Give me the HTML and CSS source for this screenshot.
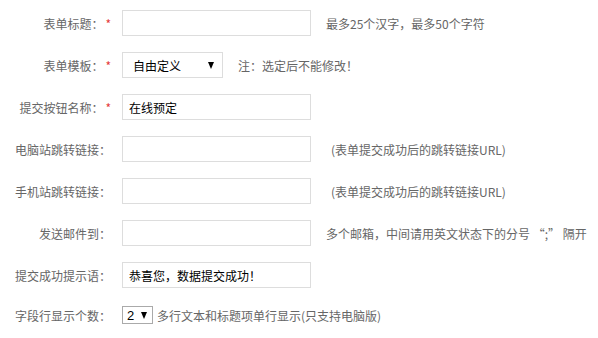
FILE: index.html
```html
<!DOCTYPE html>
<html lang="zh-CN">
<head>
    <meta charset="UTF-8">
    <title>表单设置</title>
    <link rel="stylesheet" href="styles.css">
</head>
<body>
    <div class="form">
        <div class="row">
            <label class="label">表单标题：<em>*</em></label>
            <input type="text" class="text">
            <span class="tip">最多25个汉字，最多50个字符</span>
        </div>
        <div class="row">
            <label class="label">表单模板：<em>*</em></label>
            <div class="select">
                <span>自由定义</span>
                <span class="arrow"></span>
            </div>
            <span class="tip">注：选定后不能修改！</span>
        </div>
        <div class="row">
            <label class="label">提交按钮名称：<em>*</em></label>
            <input type="text" class="text" value="在线预定">
        </div>
        <div class="row">
            <label class="label">电脑站跳转链接：</label>
            <input type="text" class="text">
            <span class="tip tip-url">(表单提交成功后的跳转链接URL)</span>
        </div>
        <div class="row">
            <label class="label">手机站跳转链接：</label>
            <input type="text" class="text">
            <span class="tip tip-url">(表单提交成功后的跳转链接URL)</span>
        </div>
        <div class="row">
            <label class="label">发送邮件到：</label>
            <input type="text" class="text">
            <span class="tip">多个邮箱，中间请用英文状态下的分号 “;” 隔开</span>
        </div>
        <div class="row">
            <label class="label">提交成功提示语：</label>
            <input type="text" class="text" value="恭喜您，数据提交成功！">
        </div>
        <div class="row row-small">
            <label class="label">字段行显示个数：</label>
            <div class="select select-small">
                <span>2</span>
                <span class="arrow"></span>
            </div>
            <span class="tip tip-near">多行文本和标题项单行显示(只支持电脑版)</span>
        </div>
    </div>
</body>
</html>
```

FILE: styles.css
```css
body {
    margin: 0;
    background: #fff;
    font-family: "Microsoft YaHei", "Noto Sans CJK SC", "Liberation Sans", sans-serif;
    font-size: 12px;
    color: #666;
}
.form {
    padding-top: 10px;
}
.row {
    display: flex;
    align-items: center;
    height: 26px;
    margin-bottom: 16px;
}
.row-small {
    height: 22px;
}
.label {
    width: 111px;
    text-align: right;
    margin-right: 11px;
    white-space: nowrap;
}
.label em {
    font-style: normal;
    color: #e4393c;
    margin-left: 2px;
}
.text {
    width: 189px;
    height: 26px;
    box-sizing: border-box;
    border: 1px solid #ddd;
    padding: 0 6px;
    font-family: inherit;
    font-size: 12px;
    color: #000;
    outline: none;
}
.select {
    width: 101px;
    height: 26px;
    box-sizing: border-box;
    border: 1px solid #ddd;
    display: flex;
    align-items: center;
    justify-content: space-between;
    padding: 0 8px 0 10px;
    color: #000;
}
.arrow {
    width: 0;
    height: 0;
    border-left: 3.5px solid transparent;
    border-right: 3.5px solid transparent;
    border-top: 7px solid #000;
}
.select-small {
    width: 31px;
    height: 18px;
    border-color: #aaa;
    padding: 0 5px 0 4px;
    font-family: "Liberation Sans", sans-serif;
    font-size: 13px;
}
.tip {
    margin-left: 15px;
    white-space: nowrap;
}
.tip-url {
    margin-left: 20px;
}
.tip-near {
    margin-left: 4px;
}
```
